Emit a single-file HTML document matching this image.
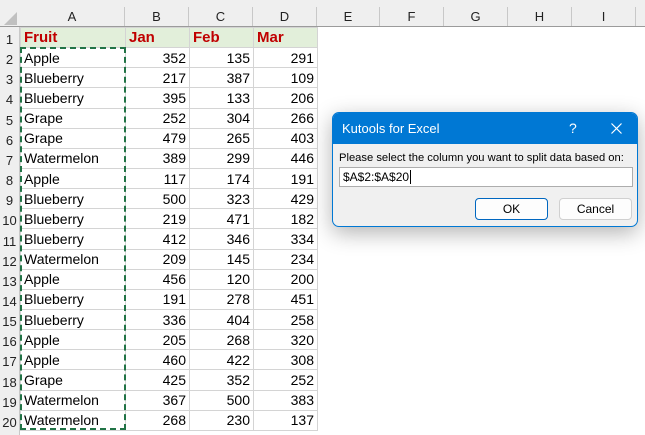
<!DOCTYPE html>
<html><head><meta charset="utf-8"><style>
*{margin:0;padding:0;box-sizing:border-box}
body{width:645px;height:435px;overflow:hidden;background:#fff;font-family:"Liberation Sans",Arial,sans-serif;position:relative}
.hdr{position:absolute;top:0;left:0;width:645px;height:27px;background:#efefef;border-bottom:1px solid #9b9b9b}
.ch{position:absolute;top:7px;height:19px;line-height:19px;text-align:center;font-size:13px;color:#222;border-right:1px solid #c8c8c8}
.rh{position:absolute;left:0;top:27px;width:20px;height:408px;background:#efefef;border-right:1px solid #c8c8c8}
.rn{position:absolute;left:0;width:19px;text-align:center;font-size:13px;color:#222}
table{position:absolute;left:20px;top:27px;border-collapse:collapse;table-layout:fixed}
td{border:1px solid #d4d4d4;height:20.15px;font-size:14px;padding:0 3px;white-space:nowrap;overflow:hidden;line-height:18px}
td.n{text-align:right}
tr.h td{background:#e2efda;color:#c00000;font-weight:bold;font-size:15px}
.sel{position:absolute;left:20px;top:47px;width:106px;height:383px;border:2px dashed #217346}
.dlg{position:absolute;left:332px;top:112px;width:306px;height:115px;background:#f0f0f0;border:1px solid #0078d4;border-radius:7px;box-shadow:0 6px 22px rgba(0,0,0,.3);overflow:hidden}
.tb{height:31px;background:#0078d4;color:#fff;font-size:13px;line-height:31px;padding-left:9px;position:relative}
.lbl{position:absolute;left:6px;top:39px;font-size:11.2px;color:#000;white-space:nowrap}
.inp{position:absolute;left:6px;top:54px;width:294px;height:20px;background:#fff;border:1px solid #adadad;font-size:12px;line-height:18px;padding-left:3px}
.btn{position:absolute;top:85px;width:73px;height:22px;background:#fdfdfd;border:1px solid #d0d0d0;border-radius:4px;font-size:12px;text-align:center;line-height:20px}
</style></head><body>
<div class="hdr">
<svg style="position:absolute;left:4px;top:12px" width="13" height="13"><polygon points="13,0 13,13 0,13" fill="#c0c0c0"/></svg>
<div class="ch" style="left:20px;width:105px">A</div>
<div class="ch" style="left:125px;width:64px">B</div>
<div class="ch" style="left:189px;width:64px">C</div>
<div class="ch" style="left:253px;width:64px">D</div>
<div class="ch" style="left:317px;width:63px">E</div>
<div class="ch" style="left:380px;width:64px">F</div>
<div class="ch" style="left:444px;width:64px">G</div>
<div class="ch" style="left:508px;width:64px">H</div>
<div class="ch" style="left:572px;width:64px">I</div>
</div>
<div class="rh">
<div class="rn" style="top:5px">1</div><div class="rn" style="top:25px">2</div><div class="rn" style="top:45px">3</div><div class="rn" style="top:65px">4</div><div class="rn" style="top:86px">5</div><div class="rn" style="top:106px">6</div><div class="rn" style="top:126px">7</div><div class="rn" style="top:146px">8</div><div class="rn" style="top:166px">9</div><div class="rn" style="top:186px">10</div><div class="rn" style="top:207px">11</div><div class="rn" style="top:227px">12</div><div class="rn" style="top:247px">13</div><div class="rn" style="top:267px">14</div><div class="rn" style="top:287px">15</div><div class="rn" style="top:307px">16</div><div class="rn" style="top:327px">17</div><div class="rn" style="top:348px">18</div><div class="rn" style="top:368px">19</div><div class="rn" style="top:388px">20</div>
</div>
<table>
<colgroup><col style="width:105px"><col style="width:64px"><col style="width:64px"><col style="width:64px"></colgroup>
<tr class="h"><td>Fruit</td><td>Jan</td><td>Feb</td><td>Mar</td></tr>
<tr><td>Apple</td><td class="n">352</td><td class="n">135</td><td class="n">291</td></tr>
<tr><td>Blueberry</td><td class="n">217</td><td class="n">387</td><td class="n">109</td></tr>
<tr><td>Blueberry</td><td class="n">395</td><td class="n">133</td><td class="n">206</td></tr>
<tr><td>Grape</td><td class="n">252</td><td class="n">304</td><td class="n">266</td></tr>
<tr><td>Grape</td><td class="n">479</td><td class="n">265</td><td class="n">403</td></tr>
<tr><td>Watermelon</td><td class="n">389</td><td class="n">299</td><td class="n">446</td></tr>
<tr><td>Apple</td><td class="n">117</td><td class="n">174</td><td class="n">191</td></tr>
<tr><td>Blueberry</td><td class="n">500</td><td class="n">323</td><td class="n">429</td></tr>
<tr><td>Blueberry</td><td class="n">219</td><td class="n">471</td><td class="n">182</td></tr>
<tr><td>Blueberry</td><td class="n">412</td><td class="n">346</td><td class="n">334</td></tr>
<tr><td>Watermelon</td><td class="n">209</td><td class="n">145</td><td class="n">234</td></tr>
<tr><td>Apple</td><td class="n">456</td><td class="n">120</td><td class="n">200</td></tr>
<tr><td>Blueberry</td><td class="n">191</td><td class="n">278</td><td class="n">451</td></tr>
<tr><td>Blueberry</td><td class="n">336</td><td class="n">404</td><td class="n">258</td></tr>
<tr><td>Apple</td><td class="n">205</td><td class="n">268</td><td class="n">320</td></tr>
<tr><td>Apple</td><td class="n">460</td><td class="n">422</td><td class="n">308</td></tr>
<tr><td>Grape</td><td class="n">425</td><td class="n">352</td><td class="n">252</td></tr>
<tr><td>Watermelon</td><td class="n">367</td><td class="n">500</td><td class="n">383</td></tr>
<tr><td>Watermelon</td><td class="n">268</td><td class="n">230</td><td class="n">137</td></tr>
</table>
<div class="sel"></div>
<div class="dlg">
<div class="tb">Kutools for Excel
<span style="position:absolute;left:236px;top:0;font-size:14px">?</span>
<svg style="position:absolute;left:278px;top:10px" width="11" height="11"><path d="M0.5 0.5L10.5 10.5M10.5 0.5L0.5 10.5" stroke="#fff" stroke-width="1.2"/></svg>
</div>
<div class="lbl">Please select the column you want to split data based on:</div>
<div class="inp">$A$2:$A$20<span style="border-left:1px solid #000;margin-left:1px"></span></div>
<div class="btn" style="left:142px;border:1px solid #0067c0">OK</div>
<div class="btn" style="left:226px">Cancel</div>
</div>
</body></html>
